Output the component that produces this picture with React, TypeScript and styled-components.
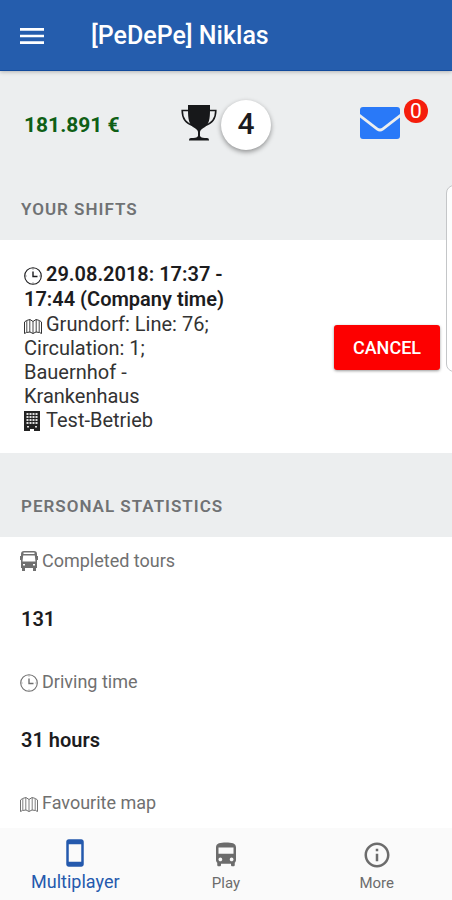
import React from 'react';
import styled, { createGlobalStyle } from 'styled-components';
import { MdDirectionsBus, MdInfoOutline, MdMenu, MdStayCurrentPortrait } from 'react-icons/md';

const GlobalStyle = createGlobalStyle`
  * { box-sizing: border-box; }
  body { margin: 0; font-family: Roboto, sans-serif; color: #1c1c1e; }
  h1, h2, p, dl, dt, dd { margin: 0; }
  button { font: inherit; border: 0; padding: 0; cursor: pointer; }
`;

const Screen = styled.div`
  position: relative;
  display: grid;
  grid-template-rows: auto 1fr auto;
  height: 100vh;
  overflow: hidden;
  background: #fff;
`;

const AppBar = styled.header`
  position: relative;
  z-index: 1;
  display: flex;
  align-items: center;
  gap: 43px;
  height: 71px;
  padding: 1px 16px 0;
  color: #fff;
  background: #255dad;
  border-bottom: 1px solid #124a9c;
  box-shadow: 0 1px 4px rgba(0, 0, 0, 0.25);
`;

const MenuButton = styled.button`
  display: flex;
  color: inherit;
  background: none;
`;

const Title = styled.h1`
  font-size: 25px;
  line-height: 32px;
  font-weight: 500;
`;

const Content = styled.main`
  min-height: 0;
  overflow-y: auto;
  scrollbar-width: none;
`;

const Summary = styled.section`
  display: grid;
  grid-template-columns: 1fr auto 1fr;
  align-items: center;
  height: 107px;
  padding: 0 24px;
  background: #eceeef;
`;

const Balance = styled.p`
  font-size: 21px;
  line-height: 24px;
  font-weight: 700;
  color: #0f5f16;
`;

const Rank = styled.div`
  display: flex;
  align-items: flex-start;
  gap: 4px;
`;

const RankBadge = styled.span`
  width: 50px;
  height: 50px;
  border-radius: 50%;
  font-size: 30px;
  line-height: 48px;
  font-weight: 500;
  text-align: center;
  background: #fff;
  box-shadow: 0 2px 5px rgba(0, 0, 0, 0.4);
`;

const MailButton = styled.button`
  position: relative;
  justify-self: end;
  display: flex;
  padding: 0 28px 4px 0;
  color: #2979f8;
  background: none;
`;

const MailCount = styled.span`
  position: absolute;
  top: -8px;
  right: 0;
  width: 24px;
  height: 24px;
  border-radius: 50%;
  font-size: 21px;
  line-height: 24px;
  text-align: center;
  color: #fff;
  background: #f51d0c;
`;

const SectionTitle = styled.h2<{ $tall?: boolean }>`
  padding: ${({ $tall }) => ($tall ? '41px 21px 19px' : '19px 21px')};
  font-size: 17px;
  line-height: 24px;
  font-weight: 600;
  letter-spacing: 1px;
  color: #707274;
  background: #eceeef;
`;

const Shift = styled.article`
  display: flex;
  align-items: center;
  justify-content: space-between;
  padding: 22px 12px 21px 24px;
`;

const ShiftText = styled.div`
  width: 210px;
  font-size: 20px;
  line-height: 24px;
  color: #333;
`;

const ShiftTime = styled.p`
  font-weight: 600;
  line-height: 25px;
  color: #1c1c1e;
`;

const InlineIcon = styled.svg`
  width: 18px;
  height: 20px;
  margin-right: 4px;
  vertical-align: -4px;
`;

const CancelButton = styled.button`
  width: 106px;
  height: 45px;
  border-radius: 3px;
  font-size: 18px;
  font-weight: 500;
  color: #fff;
  background: #fd0000;
  box-shadow: 0 1px 3px rgba(0, 0, 0, 0.4);
`;

const Stats = styled.dl`
  padding: 11px 20px;
`;

const StatLabel = styled.dt`
  font-size: 18px;
  line-height: 25px;
  color: #707070;
`;

const StatValue = styled.dd`
  padding: 34px 0 38px 1px;
  font-size: 20px;
  line-height: 24px;
  font-weight: 600;
`;

const TabBar = styled.nav`
  display: grid;
  grid-template-columns: repeat(3, 1fr);
  height: 72px;
  background: #fafafa;
`;

const Tab = styled.button<{ $active?: boolean }>`
  display: flex;
  flex-direction: column;
  align-items: center;
  justify-content: flex-end;
  gap: 3px;
  padding-bottom: 7px;
  font-size: ${({ $active }) => ($active ? '18px' : '15px')};
  line-height: ${({ $active }) => ($active ? '22px' : '20px')};
  color: ${({ $active }) => ($active ? '#2459ad' : '#6c6c6c')};
  background: none;
`;

const SideHandle = styled.div`
  position: absolute;
  z-index: 2;
  top: 185px;
  right: -10px;
  width: 16px;
  height: 187px;
  border: 1px solid #c4c6c8;
  border-radius: 8px;
  background: rgba(255, 255, 255, 0.85);
`;

const TrophyIcon = () => (
  <svg width="36" height="44" viewBox="0 -5 36 44" aria-hidden="true">
    <path fill="#17181a" d="M7 0h22v5c0 9-1 14-5 17-3 2-5 3-5 5v4c1 2 4 2 7 2q2 0 2 2v.500H8V35q0-2 2-2c3 0 6 0 7-2v-4c0-2-2-3-5-5C8 19 7 14 7 5z" />
    <path fill="none" stroke="#17181a" strokeWidth="1.600" d="M7.500 5.500H1.200c0 8 4 13 10.800 15M28.500 5.500h6.300c0 8-4 13-10.800 15" />
  </svg>
);

const EnvelopeIcon = () => (
  <svg width="40" height="32" viewBox="0 0 40 32" fill="currentColor" aria-hidden="true">
    <path d="M3 0h34q3 0 3 3v4L22.500 20.500q-2.500 1.800-5 0L0 7V3q0-3 3-3z" />
    <path d="M0 10.500l16.500 12.800q3.500 2.500 7 0L40 10.500V29q0 3-3 3H3q-3 0-3-3z" />
  </svg>
);

const ClockIcon = () => (
  <InlineIcon viewBox="0 0 18 20" fill="none" stroke="currentColor" aria-hidden="true">
    <circle cx="9" cy="11" r="8.300" strokeWidth="1.100" />
    <path strokeWidth="1.400" d="M9 6.500v5h4.500" />
    <path strokeWidth="0.800" d="M9 3.500v1M9 17.500v1M1.500 11h1M15.500 11h1" />
  </InlineIcon>
);

const MapIcon = () => (
  <InlineIcon viewBox="0 0 18 20" fill="none" stroke="currentColor" strokeWidth="1" aria-hidden="true">
    <path d="M.5 7L2.500 5.500 6 4.500l3 2 3-2 3.500 1 2 1.500v11.500l-2-1-3.500-.500-3 1.500-3-1.500-3.500.500-2 1z" />
    <path strokeWidth="0.900" d="M9 6.500v12M5.800 5v12M12.200 5v12M2.800 6v11M15.200 6v11" />
  </InlineIcon>
);

const BuildingIcon = () => (
  <InlineIcon viewBox="0 0 18 20" aria-hidden="true">
    <path fill="#222" d="M0 0h16v20h-6v-2H6v2H0z" />
    <path fill="none" stroke="#ddd" strokeWidth="2" strokeDasharray="2 1" d="M2.500 3h11M2.500 6h11M2.500 9h11M2.500 12h11" />
    <path fill="#ddd" d="M3 15h2v1.500H3zM11 15h2v1.500h-2z" />
  </InlineIcon>
);

const BusIcon = () => (
  <InlineIcon viewBox="0 0 18 20" aria-hidden="true">
    <path
      fill="currentColor"
      fillRule="evenodd"
      d="M4 0h10c2 0 3 1 3 3v2h1v4h-1v8h-1v3h-3v-3H5v3H2v-3H1V9H0V5h1V3c0-2 1-3 3-3zM3.500 1.500v1.500h11V1.500zM3.200 4.500L2.500 10.500h13l-.700-6zM3 13v1.500h2V13zM13 13v1.500h2V13z"
    />
  </InlineIcon>
);

const stats = [
  { label: 'Completed tours', value: '131', Icon: BusIcon },
  { label: 'Driving time', value: '31 hours', Icon: ClockIcon },
  { label: 'Favourite map', value: '', Icon: MapIcon },
];

export default function App() {
  return (
    <>
      <GlobalStyle />
      <Screen>
        <AppBar>
          <MenuButton aria-label="Menu"><MdMenu size={32} /></MenuButton>
          <Title>[PeDePe] Niklas</Title>
        </AppBar>
        <Content>
          <Summary>
            <Balance>181.891 €</Balance>
            <Rank>
              <TrophyIcon />
              <RankBadge>4</RankBadge>
            </Rank>
            <MailButton aria-label="Messages">
              <EnvelopeIcon />
              <MailCount>0</MailCount>
            </MailButton>
          </Summary>
          <SectionTitle>YOUR SHIFTS</SectionTitle>
          <Shift>
            <ShiftText>
              <ShiftTime><ClockIcon />29.08.2018: 17:37 - 17:44 (Company time)</ShiftTime>
              <p><MapIcon />Grundorf: Line: 76; Circulation: 1;<br />Bauernhof - Krankenhaus</p>
              <p><BuildingIcon />Test-Betrieb</p>
            </ShiftText>
            <CancelButton>CANCEL</CancelButton>
          </Shift>
          <SectionTitle $tall>PERSONAL STATISTICS</SectionTitle>
          <Stats>
            {stats.map(({ label, value, Icon }) => (
              <React.Fragment key={label}>
                <StatLabel><Icon />{label}</StatLabel>
                {value && <StatValue>{value}</StatValue>}
              </React.Fragment>
            ))}
          </Stats>
        </Content>
        <TabBar>
          <Tab $active><MdStayCurrentPortrait size={30} />Multiplayer</Tab>
          <Tab><MdDirectionsBus size={30} />Play</Tab>
          <Tab><MdInfoOutline size={30} />More</Tab>
        </TabBar>
        <SideHandle />
      </Screen>
    </>
  );
}
